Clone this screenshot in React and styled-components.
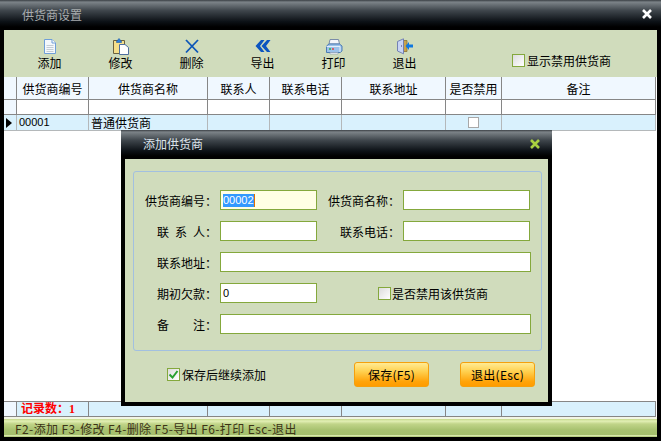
import React from 'react';
import styled, { createGlobalStyle } from 'styled-components';

const columns = '13px 72px 119px 62px 72px 104px 56px 154px';

const GlobalStyle = createGlobalStyle`
  html, body {
    margin: 0;
    padding: 0;
    background: #000;
  }
  body {
    font-family: "Noto Sans CJK SC", "Liberation Sans", sans-serif;
    font-size: 12px;
    color: #000;
  }
`;

const Shell = styled.div`
  position: relative;
  width: 661px;
  height: 441px;
  overflow: hidden;
  display: flex;
  flex-direction: column;
  background: #000;
`;

const TitleBar = styled.div`
  height: ${(p) => p.$height}px;
  flex: none;
  display: flex;
  align-items: center;
  justify-content: space-between;
  padding: 0 ${(p) => p.$right}px 2px ${(p) => p.$left}px;
  box-sizing: border-box;
  background: linear-gradient(#3a3f44 0, #7c8388 7%, #3f464c 35%, #0c1116 72%, #000 90%);
  color: ${(p) => p.$color};
  font-size: 12px;
`;

const Content = styled.div`
  flex: 1;
  margin: 0 4px 0 4px;
  display: flex;
  flex-direction: column;
  background: #fff;
  min-height: 0;
`;

const Toolbar = styled.div`
  height: 47px;
  flex: none;
  display: flex;
  padding-left: 10px;
  background: #d0dcbc;
  position: relative;
`;

const ToolButton = styled.div`
  width: 71px;
  display: flex;
  flex-direction: column;
  align-items: center;
  padding-top: 8px;
  box-sizing: border-box;
  font-size: 12px;
  line-height: 14px;
  svg {
    display: block;
    width: 18px;
    height: 17px;
    margin-bottom: 1px;
  }
`;

const ToolCheck = styled.label`
  margin-left: auto;
  margin-right: 46px;
  padding-top: 24px;
  display: flex;
  align-items: flex-start;
  gap: 2px;
  line-height: 13px;
`;

const CheckBox = styled.span`
  width: 13px;
  height: 13px;
  flex: none;
  box-sizing: border-box;
  border: 1px solid #84a83c;
  background: linear-gradient(135deg, #dcdcdc, #fff);
  display: flex;
  align-items: center;
  justify-content: center;
`;

const GridRow = styled.div`
  display: grid;
  grid-template-columns: ${columns};
  width: 652px;
  height: ${(p) => p.$height}px;
  flex: none;
  box-sizing: border-box;
  background: ${(p) => p.$bg};
  border-bottom: 1px solid ${(p) => p.$line};
`;

const Cell = styled.div`
  box-sizing: border-box;
  border-right: 1px solid ${(p) => p.$line};
  background: ${(p) => p.$bg || 'transparent'};
  display: flex;
  align-items: center;
  justify-content: ${(p) => (p.$left ? 'flex-start' : 'center')};
  padding-left: ${(p) => (p.$left ? '2px' : '0')};
  line-height: 13px;
  white-space: nowrap;
  overflow: ${(p) => (p.$visible ? 'visible' : 'hidden')};
`;

const Code = styled.span`
  font-family: "Liberation Sans", sans-serif;
  font-size: 11px;
`;

const RowPointer = styled.span`
  width: 0;
  height: 0;
  margin-right: 2px;
  border-top: 5px solid transparent;
  border-bottom: 5px solid transparent;
  border-left: 6px solid #000;
`;

const CellBox = styled.span`
  width: 11px;
  height: 11px;
  box-sizing: border-box;
  background: #fff;
  border: 1px solid #a8a8a8;
`;

const TableBody = styled.div`
  flex: 1;
  background: #fff;
`;

const Footer = styled(GridRow)`
  border-top: 1px solid #868686;
`;

const RecordCount = styled.span`
  color: #f00;
  font-weight: 700;
  font-family: "Liberation Serif", "Noto Sans CJK SC", serif;
  font-size: 12px;
  padding-left: 2px;
`;

const FooterGap = styled.div`
  height: 2px;
  flex: none;
  background: #f2f6e6;
`;

const StatusBar = styled.div`
  height: 18px;
  flex: none;
  margin: 0 4px;
  display: flex;
  align-items: center;
  padding-left: 11px;
  background: linear-gradient(#c4d88c 0, #e2efb4 12%, #c0d488 28%, #a8c270 60%, #a4bf6c 88%, #dcebb0 92%, #a4bf6c 100%);
  color: #3c3416;
  font-size: 12px;
  letter-spacing: 0.4px;
  white-space: pre;
`;

const BottomEdge = styled.div`
  height: 4px;
  flex: none;
  background: #000;
`;

const Dialog = styled.div`
  position: absolute;
  left: 121px;
  top: 130px;
  width: 431px;
  height: 276px;
  box-sizing: border-box;
  background: #000;
  display: flex;
  flex-direction: column;
`;

const DialogBody = styled.div`
  flex: 1;
  margin: 0 4px 4px 4px;
  padding: 12px 6px 0 8px;
  background: #d0dcbc;
`;

const Group = styled.div`
  height: 180px;
  box-sizing: border-box;
  border: 1px solid #a2c0e0;
  border-radius: 3px;
  padding-top: 18px;
  display: grid;
  grid-template-columns: 86px 97px 86px 128px;
  grid-auto-rows: 20px;
  row-gap: 11px;
  align-items: center;
`;

const Label = styled.div`
  text-align: right;
  padding-right: 3px;
  white-space: pre;
`;

const Input = styled.div`
  box-sizing: border-box;
  height: 20px;
  width: ${(p) => p.$width || '100%'};
  grid-column: ${(p) => p.$span || 'auto'};
  border: 1px solid #84a83c;
  background: ${(p) => p.$bg || '#fff'};
  display: flex;
  align-items: center;
  padding-left: 2px;
  font-family: "Liberation Sans", sans-serif;
  font-size: 11px;
`;

const Selected = styled.span`
  background: #3399ff;
  color: #fff;
  line-height: 13px;
  border-right: 1px solid #e07000;
`;

const GroupCheck = styled.label`
  grid-column: 3 / span 2;
  padding-left: 61px;
  display: flex;
  align-items: center;
  gap: 1px;
`;

const Actions = styled.div`
  margin-top: 11px;
  display: flex;
  align-items: center;
  padding-left: 34px;
`;

const SaveCheck = styled.label`
  display: flex;
  align-items: center;
  gap: 2px;
  margin-right: auto;
`;

const ActionButton = styled.div`
  width: 75px;
  height: 25px;
  box-sizing: border-box;
  margin-right: ${(p) => p.$gap}px;
  border: 1px solid #f5a00c;
  border-radius: 3px;
  background: linear-gradient(#ffeb94 0, #ffd252 35%, #ffa40a 80%, #ff9c00 100%);
  display: flex;
  align-items: center;
  justify-content: center;
  letter-spacing: 0.3px;
`;

const CloseIcon = ({ color }) => (
  <svg width="10" height="10" viewBox="0 0 10 10">
    <path d="M1 1 L9 9 M9 1 L1 9" stroke={color} strokeWidth="2.6" />
  </svg>
);

const DocIcon = () => (
  <svg viewBox="0 0 18 17">
    <path d="M3.5 1.5 H11 L14.5 5 V15.5 H3.5 Z" fill="#f4f8fc" stroke="#6f9ed8" />
    <path d="M11 1.5 V5 H14.5" fill="#fff" stroke="#6f9ed8" />
    <path d="M5.5 7.5 H12.5 M5.5 9.5 H12.5 M5.5 11.5 H12.5 M5.5 13.5 H12.5" stroke="#c4ccd4" />
  </svg>
);

const PasteIcon = () => (
  <svg viewBox="0 0 18 17">
    <path d="M1.5 2.5 H12.5 V15.5 H1.5 Z" fill="#f6e08a" stroke="#6b6240" />
    <path d="M4.5 3.5 L7 0.5 L9.5 3.5 V4.5 H4.5 Z" fill="#2f7fd8" stroke="#1e5aa8" strokeWidth="0.6" />
    <path d="M7.5 6.5 H13 L16.5 9.5 V16.5 H7.5 Z" fill="#fff" stroke="#4f6f9f" />
  </svg>
);

const CrossIcon = () => (
  <svg viewBox="0 0 18 17">
    <path d="M3 2 L15 14.5" stroke="#0b55b8" strokeWidth="1.8" />
    <path d="M15 2 L3 14.5" stroke="#0b55b8" strokeWidth="1.8" />
  </svg>
);

const BackIcon = () => (
  <svg viewBox="0 0 18 17">
    <path d="M7 2 H10.5 L6 8 L10.5 14 H7 L1.5 8 Z" fill="#0b55c0" />
    <path d="M13 2 H16.5 L12 8 L16.5 14 H13 L7.5 8 Z" fill="#0b55c0" />
  </svg>
);

const PrintIcon = () => (
  <svg viewBox="0 0 18 17">
    <path d="M5 1.5 H13.5 L14.5 6 H4 Z" fill="#f4f6fa" stroke="#7a8ca8" />
    <path d="M1.5 8 L4 6 H14.5 L17 8 V13 L15 14.5 H1.5 Z" fill="#9cc2ea" stroke="#4c7cb4" />
    <path d="M1.5 8.5 H15 V14" fill="none" stroke="#e4eef8" />
    <path d="M4 11 H6 " stroke="#2fae4a" strokeWidth="1.4" />
    <path d="M7 11 H9" stroke="#e04040" strokeWidth="1.4" />
    <path d="M5 14.5 H13 V16 H5 Z" fill="#fff" stroke="#8a9ab0" strokeWidth="0.6" />
  </svg>
);

const ExitIcon = () => (
  <svg viewBox="0 0 18 17">
    <path d="M6 2.5 H11 V13.5 H6 Z" fill="#c9a24a" stroke="#8a7436" strokeWidth="0.8" />
    <path d="M1.5 3.5 L7.5 0.8 V15.8 L1.5 13 Z" fill="#c8d4f4" stroke="#6a78b0" strokeWidth="0.9" />
    <path d="M5 8 H5.8" stroke="#5a4a8a" strokeWidth="1.4" />
    <path d="M17 6.5 H13 V4 L9.5 8 L13 12 V9.5 H17 Z" fill="#0f78e0" />
  </svg>
);

const CheckMark = () => (
  <svg width="11" height="11" viewBox="0 0 11 11">
    <path d="M1.5 5.5 L4.5 8.5 L9.5 2" fill="none" stroke="#28a030" strokeWidth="2" />
  </svg>
);

const tools = [
  { label: '添加', icon: <DocIcon /> },
  { label: '修改', icon: <PasteIcon /> },
  { label: '删除', icon: <CrossIcon /> },
  { label: '导出', icon: <BackIcon /> },
  { label: '打印', icon: <PrintIcon /> },
  { label: '退出', icon: <ExitIcon /> },
];

const headers = ['供货商编号', '供货商名称', '联系人', '联系电话', '联系地址', '是否禁用', '备注'];

const App = () => (
  <>
    <GlobalStyle />
    <Shell>
      <TitleBar $height={30} $left={22} $right={9} $color="#a8acae">
        <span>供货商设置</span>
        <CloseIcon color="#fff" />
      </TitleBar>
      <Content>
        <Toolbar>
          {tools.map((tool) => (
            <ToolButton key={tool.label}>
              {tool.icon}
              {tool.label}
            </ToolButton>
          ))}
          <ToolCheck>
            <CheckBox />
            显示禁用供货商
          </ToolCheck>
        </Toolbar>
        <GridRow $height={23} $bg="#f0f8ff" $line="#868686">
          <Cell $line="#868686" />
          {headers.map((h) => (
            <Cell key={h} $line="#868686">{h}</Cell>
          ))}
        </GridRow>
        <GridRow $height={15} $bg="#fff" $line="#868686">
          <Cell $line="#868686" $bg="#f0f8ff" />
          {headers.map((h) => (
            <Cell key={h} $line="#868686" />
          ))}
        </GridRow>
        <GridRow $height={16} $bg="#d9f1fd" $line="#b4b8ba">
          <Cell $line="#b4b8ba"><RowPointer /></Cell>
          <Cell $line="#b4b8ba" $left><Code>00001</Code></Cell>
          <Cell $line="#b4b8ba" $left>普通供货商</Cell>
          <Cell $line="#b4b8ba" />
          <Cell $line="#b4b8ba" />
          <Cell $line="#b4b8ba" />
          <Cell $line="#b4b8ba"><CellBox /></Cell>
          <Cell $line="#b4b8ba" />
        </GridRow>
        <TableBody />
        <Footer $height={16} $bg="#d9f1fd" $line="#868686">
          <Cell $line="#868686" $bg="#f0f8ff" />
          <Cell $line="#868686" $left $visible>
            <RecordCount>记录数：1</RecordCount>
          </Cell>
          <Cell $line="#868686" />
          <Cell $line="#868686" />
          <Cell $line="#868686" />
          <Cell $line="#868686" />
          <Cell $line="#868686" />
          <Cell $line="#868686" />
        </Footer>
        <FooterGap />
      </Content>
      <StatusBar>{'F2-添加 F3-修改 F4-删除 F5-导出 F6-打印 Esc-退出'}</StatusBar>
      <BottomEdge />
      <Dialog>
        <TitleBar $height={29} $left={22} $right={12} $color="#dce4ec">
          <span>添加供货商</span>
          <CloseIcon color="#a8d040" />
        </TitleBar>
        <DialogBody>
          <Group>
            <Label>供货商编号：</Label>
            <Input $bg="#ffffe4"><Selected>00002</Selected></Input>
            <Label>供货商名称：</Label>
            <Input $width="127px" />
            <Label>联&ensp;系&ensp;人：</Label>
            <Input />
            <Label>联系电话：</Label>
            <Input $width="127px" />
            <Label>联系地址：</Label>
            <Input $span="2 / span 3" />
            <Label>期初欠款：</Label>
            <Input>0</Input>
            <GroupCheck>
              <CheckBox />
              是否禁用该供货商
            </GroupCheck>
            <Label>备　　注：</Label>
            <Input $span="2 / span 3" />
          </Group>
          <Actions>
            <SaveCheck>
              <CheckBox><CheckMark /></CheckBox>
              保存后继续添加
            </SaveCheck>
            <ActionButton $gap={31}>保存(F5)</ActionButton>
            <ActionButton $gap={7}>退出(Esc)</ActionButton>
          </Actions>
        </DialogBody>
      </Dialog>
    </Shell>
  </>
);

export default App;
